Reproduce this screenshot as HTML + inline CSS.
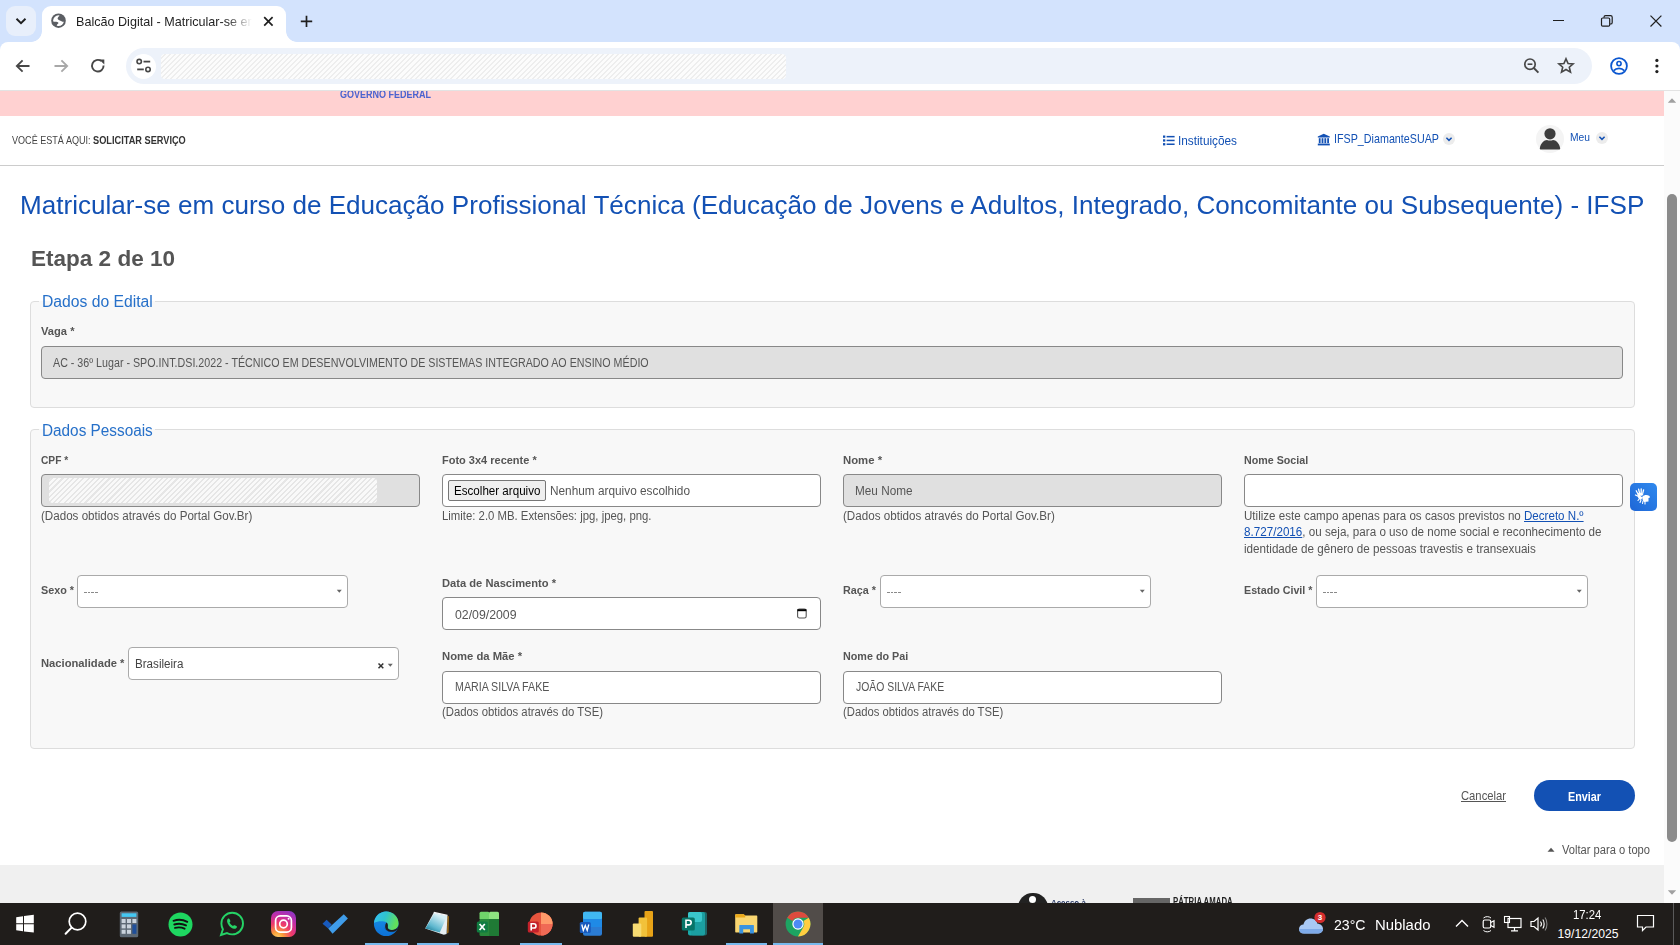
<!DOCTYPE html>
<html lang="pt-BR">
<head>
<meta charset="utf-8">
<title>Balcão Digital</title>
<style>
*{box-sizing:border-box;margin:0;padding:0}
html,body{width:1680px;height:945px;overflow:hidden;background:#fff;font-family:"Liberation Sans",sans-serif;position:relative}
.a{position:absolute}
.t{position:absolute;white-space:nowrap;line-height:1;transform-origin:0 0}
/* chrome */
#tabstrip{left:0;top:0;width:1680px;height:52px;background:#d3e3fd}
#toolbar{left:0;top:42px;width:1680px;height:48px;background:#fff;border-radius:8px 8px 0 0}
#omni{left:126px;top:48px;width:1466px;height:36px;background:#edf2fa;border-radius:18px}
#page{left:0;top:91px;width:1664px;height:812px;background:#fff;overflow:hidden}
#scroll{left:1664px;top:91px;width:16px;height:812px;background:#fbfbfb}
#taskbar{left:0;top:903px;width:1680px;height:42px;background:#201d1b}
.lbl{font-weight:bold;font-size:11px;color:#555}
.help{font-size:12px;color:#555}
.inp{position:absolute;border:1px solid #888;border-radius:4px;background:#fff}
.dis{background:#e0e0e0}
.sel{position:absolute;border:1px solid #aaa;border-radius:4px;background:#fff}
.fs{position:absolute;border:1px solid #ddd;border-radius:4px;background:#f8f8f8}
.leg{font-size:16px;color:#2670c9}
</style>
</head>
<body>
<!-- Chrome window -->
<div id="tabstrip" class="a"></div>
<!-- tab -->
<div class="a" style="left:42px;top:6px;width:244px;height:40px;background:#fff;border-radius:9px 9px 0 0"></div>
<div class="a" style="left:31px;top:31px;width:11px;height:11px;background:radial-gradient(circle at 0 0,#d3e3fd 10.5px,#fff 11.2px)"></div>
<div class="a" style="left:286px;top:31px;width:11px;height:11px;background:radial-gradient(circle at 100% 0,#d3e3fd 10.5px,#fff 11.2px)"></div>
<div class="a" style="left:6px;top:6px;width:30px;height:30px;border-radius:9px;background:#e8effb"></div>
<svg class="a" style="left:14px;top:14px" width="14" height="14" viewBox="0 0 14 14"><path d="M2.5 4.8 L7 9.2 L11.5 4.8" fill="none" stroke="#1f1f1f" stroke-width="1.9"/></svg>
<svg class="a" style="left:51px;top:13px" width="16" height="16" viewBox="0 0 16 16"><defs><clipPath id="gcl"><circle cx="7.5" cy="7.7" r="5.4"/></clipPath></defs><circle cx="7.5" cy="7.7" r="7.3" fill="#5b5e63"/><g clip-path="url(#gcl)"><path d="M0 8.2 L0 0 L8.6 0 L8.4 3 C7.4 3.8 6.6 4.6 6.6 5.6 C6.6 6.8 8.6 7.4 10 7.9 C11.2 8.4 12.2 9 13 8.8 L16 8 L16 16 L7.6 16 C6.6 14.6 5.6 13.2 5.8 12.2 C6 11 7.8 10.6 7.4 9.7 C7 8.9 5.6 8.8 4.4 8.8 C3 8.8 1.6 8.6 0 8.2Z" fill="#fff"/></g></svg>
<div id="tabtitle" class="t" style="left:76px;top:16.2px;font-size:12.6px;color:#1f1f1f;width:178px;overflow:hidden;-webkit-mask-image:linear-gradient(90deg,#000 150px,transparent 176px)">Balcão Digital - Matricular-se em curso</div>
<svg class="a" style="left:262px;top:15px" width="13" height="13" viewBox="0 0 13 13"><path d="M2.2 2.2 L10.6 10.6 M10.6 2.2 L2.2 10.6" stroke="#1f1f1f" stroke-width="1.7"/></svg>
<svg class="a" style="left:299px;top:14px" width="15" height="15" viewBox="0 0 15 15"><path d="M7.5 1.7 V13.1 M1.8 7.4 H13.2" stroke="#1f1f1f" stroke-width="1.7"/></svg>
<!-- window controls -->
<div class="a" style="left:1553px;top:20px;width:11px;height:1.3px;background:#1f1f1f"></div>
<svg class="a" style="left:1600px;top:14px" width="14" height="14" viewBox="0 0 14 14"><rect x="1.5" y="4" width="8.2" height="8.2" rx="1.2" fill="none" stroke="#1f1f1f" stroke-width="1.2"/><path d="M4 3.8 V3.2 C4 2.2 4.6 1.6 5.6 1.6 H10.6 C11.6 1.6 12.2 2.2 12.2 3.2 V8.4 C12.2 9.4 11.6 10 10.6 10 H10" fill="none" stroke="#1f1f1f" stroke-width="1.2"/></svg>
<svg class="a" style="left:1649px;top:14px" width="14" height="14" viewBox="0 0 14 14"><path d="M1.5 1.6 L12.4 12.5 M12.4 1.6 L1.5 12.5" stroke="#1f1f1f" stroke-width="1.2"/></svg>

<div id="toolbar" class="a"></div>
<svg class="a" style="left:13px;top:56px" width="20" height="20" viewBox="0 0 20 20"><path d="M16.5 10 H4.2 M9.6 4.3 L3.8 10 L9.6 15.7" fill="none" stroke="#474747" stroke-width="1.8"/></svg>
<svg class="a" style="left:51px;top:56px" width="20" height="20" viewBox="0 0 20 20"><path d="M3.5 10 H15.8 M10.4 4.3 L16.2 10 L10.4 15.7" fill="none" stroke="#a8a8a8" stroke-width="1.8"/></svg>
<svg class="a" style="left:88px;top:56px" width="20" height="20" viewBox="0 0 20 20"><path d="M15.6 9.6 A5.8 5.8 0 1 1 13.3 5.1" fill="none" stroke="#474747" stroke-width="1.9"/><path d="M11.2 3.4 L16.3 3.4 L16.3 8.5Z" fill="#474747"/></svg>
<div id="omni" class="a"></div>
<div class="a" style="left:131px;top:53.5px;width:25px;height:25px;border-radius:50%;background:#fff"></div>
<svg class="a" style="left:134px;top:57px" width="20" height="18" viewBox="0 0 20 18"><circle cx="5.2" cy="4.6" r="2.2" fill="none" stroke="#474747" stroke-width="1.6"/><path d="M9.5 4.6 H16.2" stroke="#474747" stroke-width="1.8"/><circle cx="14" cy="12.4" r="2.2" fill="none" stroke="#474747" stroke-width="1.6"/><path d="M3.2 12.4 H9.8" stroke="#474747" stroke-width="1.8"/></svg>
<div class="a" style="left:161px;top:54px;width:625px;height:25px;border-radius:4px;background:repeating-linear-gradient(-45deg,#fcfcfc 0 2.2px,#eeeeee 2.2px 3.6px)"></div>
<svg class="a" style="left:1522px;top:56px" width="20" height="20" viewBox="0 0 20 20"><circle cx="8" cy="8.2" r="5.2" fill="none" stroke="#474747" stroke-width="1.7"/><path d="M5.6 8.2 H10.4" stroke="#474747" stroke-width="1.6"/><path d="M11.8 12 L16.4 16.6" stroke="#474747" stroke-width="1.9"/></svg>
<svg class="a" style="left:1556px;top:56px" width="20" height="20" viewBox="0 0 20 20"><path d="M10 2.8 L12.1 7.5 L17.1 7.9 L13.3 11.2 L14.5 16.2 L10 13.5 L5.5 16.2 L6.7 11.2 L2.9 7.9 L7.9 7.5Z" fill="none" stroke="#474747" stroke-width="1.6" stroke-linejoin="miter"/></svg>
<svg class="a" style="left:1608px;top:55px" width="22" height="22" viewBox="0 0 22 22"><circle cx="11" cy="11" r="7.9" fill="none" stroke="#0b57d0" stroke-width="1.8"/><circle cx="11" cy="8.6" r="2.1" fill="none" stroke="#0b57d0" stroke-width="1.6"/><path d="M5.7 15.6 C7.2 13.9 9 13.3 11 13.3 C13 13.3 14.8 13.9 16.3 15.6" fill="none" stroke="#0b57d0" stroke-width="1.7"/></svg>
<svg class="a" style="left:1650px;top:56px" width="14" height="20" viewBox="0 0 14 20"><circle cx="6.9" cy="4.4" r="1.6" fill="#1f1f1f"/><circle cx="6.9" cy="10" r="1.6" fill="#1f1f1f"/><circle cx="6.9" cy="15.6" r="1.6" fill="#1f1f1f"/></svg>
<div class="a" style="left:0;top:90px;width:1680px;height:1px;background:#e3e3e3"></div>

<!-- page -->
<div id="page" class="a"></div>
<div id="scroll" class="a"></div>
<div class="a" style="left:0;top:91px;width:1664px;height:25px;background:#ffd1d1;overflow:hidden">
  <div id="gov" class="t" style="left:340px;top:-2px;font-size:11px;font-weight:bold;color:#4a63cf;transform:scaleX(0.818)">GOVERNO FEDERAL</div>
</div>
<div id="bc1" class="t" style="left:11.5px;top:135.2px;font-size:11px;color:#444;transform:scaleX(0.824)">VOCÊ ESTÁ AQUI: </div>
<div id="bc2" class="t" style="left:92.5px;top:135.2px;font-size:11px;color:#333;font-weight:bold;transform:scaleX(0.837)">SOLICITAR SERVIÇO</div>
<div id="navinst" class="t" style="left:1178px;top:134px;font-size:13px;color:#1351b4;transform:scaleX(0.907)">Instituições</div>
<div id="navifsp" class="t" style="left:1334px;top:132px;font-size:13px;color:#1351b4;transform:scaleX(0.826)">IFSP_DiamanteSUAP</div>
<div id="navmeu" class="t" style="left:1570px;top:131.5px;font-size:10.5px;color:#1351b4;transform:scaleX(0.979)">Meu</div>
<div class="a" style="left:0;top:164.5px;width:1664px;height:1px;background:#ccc"></div>

<div id="title" class="t" style="left:20px;top:192.8px;font-size:25px;color:#1351b4;transform:scaleX(1.043)">Matricular-se em curso de Educação Profissional Técnica (Educação de Jovens e Adultos, Integrado, Concomitante ou Subsequente) - IFSP</div>
<div id="etapa" class="t" style="left:31px;top:248.4px;font-size:22px;color:#555;font-weight:bold;transform:scaleX(1.024)">Etapa 2 de 10</div>

<!-- fieldset 1 -->
<div class="fs" style="left:30px;top:300.5px;width:1605px;height:107px"></div>
<div class="a" style="left:39px;top:296px;width:116px;height:8px;background:#fff"></div>
<div class="a" style="left:39px;top:301px;width:116px;height:6px;background:#f8f8f8"></div>
<div id="leg1" class="t leg" style="left:41.5px;top:293.5px;transform:scaleX(0.981)">Dados do Edital</div>
<div id="lvaga" class="t lbl" style="left:41px;top:325.7px;transform:scaleX(1.014)">Vaga *</div>
<div class="inp dis" style="left:41px;top:346px;width:1582px;height:33px"></div>
<div id="vvaga" class="t" style="left:53px;top:356.8px;font-size:12px;color:#555;transform:scaleX(0.891)">AC - 36º Lugar - SPO.INT.DSI.2022 - TÉCNICO EM DESENVOLVIMENTO DE SISTEMAS INTEGRADO AO ENSINO MÉDIO</div>

<!-- fieldset 2 -->
<div class="fs" style="left:30px;top:428.5px;width:1605px;height:320px"></div>
<div class="a" style="left:39px;top:424px;width:116px;height:8px;background:#fff"></div>
<div class="a" style="left:39px;top:429px;width:116px;height:6px;background:#f8f8f8"></div>
<div id="leg2" class="t leg" style="left:41.5px;top:422.5px;transform:scaleX(0.958)">Dados Pessoais</div>

<div id="lcpf" class="t lbl" style="left:41px;top:454.7px;transform:scaleX(0.927)">CPF *</div>
<div id="lfoto" class="t lbl" style="left:442px;top:454.7px;transform:scaleX(0.999)">Foto 3x4 recente *</div>
<div id="lnome" class="t lbl" style="left:843px;top:454.7px;transform:scaleX(1.031)">Nome *</div>
<div id="lnsoc" class="t lbl" style="left:1244px;top:454.7px;transform:scaleX(0.972)">Nome Social</div>

<div class="inp dis" style="left:41px;top:474px;width:379px;height:33px"></div>
<div class="a" style="left:49px;top:478px;width:328px;height:25px;border-radius:4px;background:repeating-linear-gradient(-45deg,#f9f9f9 0 2.2px,#e6e6e6 2.2px 3.7px)"></div>
<div class="inp" style="left:442px;top:474px;width:379px;height:33px"></div>
<div class="a" style="left:448px;top:480px;width:98px;height:21px;background:#efefef;border:1px solid #767676;border-radius:2px"></div>
<div id="vbtn" class="t" style="left:454px;top:484.5px;font-size:12px;color:#000;transform:scaleX(0.967)">Escolher arquivo</div>
<div id="vnenhum" class="t" style="left:549.5px;top:484.5px;font-size:12px;color:#555;transform:scaleX(0.985)">Nenhum arquivo escolhido</div>
<div class="inp dis" style="left:843px;top:474px;width:379px;height:33px"></div>
<div id="vnome" class="t" style="left:855px;top:484.5px;font-size:12px;color:#555;transform:scaleX(0.980)">Meu Nome</div>
<div class="inp" style="left:1244px;top:474px;width:379px;height:33px"></div>

<div id="h1" class="t help" style="left:41px;top:509.5px;transform:scaleX(0.967)">(Dados obtidos através do Portal Gov.Br)</div>
<div id="h2" class="t help" style="left:442px;top:509.5px;transform:scaleX(0.946)">Limite: 2.0 MB. Extensões: jpg, jpeg, png.</div>
<div id="h3" class="t help" style="left:843px;top:509.5px;transform:scaleX(0.969)">(Dados obtidos através do Portal Gov.Br)</div>
<div id="h4a" class="t help" style="left:1244px;top:509.5px;transform:scaleX(0.965)">Utilize este campo apenas para os casos previstos no <span style="color:#1351b4;text-decoration:underline">Decreto N.º</span></div>
<div id="h4b" class="t help" style="left:1244px;top:526.3px;transform:scaleX(0.971)"><span style="color:#1351b4;text-decoration:underline">8.727/2016</span>, ou seja, para o uso de nome social e reconhecimento de</div>
<div id="h4c" class="t help" style="left:1244px;top:543.1px;transform:scaleX(0.972)">identidade de gênero de pessoas travestis e transexuais</div>

<!-- row 2 -->
<div id="lsexo" class="t lbl" style="left:41px;top:585.2px;transform:scaleX(0.981)">Sexo *</div>
<div class="sel" style="left:77px;top:574.5px;width:271px;height:33px"></div>
<div id="lraca" class="t lbl" style="left:843px;top:585.2px;transform:scaleX(0.981)">Raça *</div>
<div class="sel" style="left:880px;top:574.5px;width:271px;height:33px"></div>
<div id="lestc" class="t lbl" style="left:1244px;top:585.2px;transform:scaleX(0.974)">Estado Civil *</div>
<div class="sel" style="left:1316px;top:574.5px;width:272px;height:33px"></div>
<div id="ldata" class="t lbl" style="left:442px;top:578.2px;transform:scaleX(1.014)">Data de Nascimento *</div>
<div class="inp" style="left:442px;top:597px;width:379px;height:33px"></div>
<div id="vdata" class="t" style="left:455px;top:608.6px;font-size:12px;color:#555;transform:scaleX(1.024)">02/09/2009</div>

<!-- row 3 -->
<div id="lnac" class="t lbl" style="left:41px;top:657.7px;transform:scaleX(1.019)">Nacionalidade *</div>
<div class="sel" style="left:128px;top:647px;width:271px;height:33px"></div>
<div id="vnac" class="t" style="left:134.5px;top:658px;font-size:12.5px;color:#444;transform:scaleX(0.929)">Brasileira</div>
<div id="lmae" class="t lbl" style="left:442px;top:650.7px;transform:scaleX(1.024)">Nome da Mãe *</div>
<div class="inp" style="left:442px;top:670.5px;width:379px;height:33px"></div>
<div id="vmae" class="t" style="left:455px;top:680.8px;font-size:12px;color:#555;transform:scaleX(0.888)">MARIA SILVA FAKE</div>
<div id="h5" class="t help" style="left:442px;top:705.8px;transform:scaleX(0.944)">(Dados obtidos através do TSE)</div>
<div id="lpai" class="t lbl" style="left:843px;top:650.7px;transform:scaleX(0.979)">Nome do Pai</div>
<div class="inp" style="left:843px;top:670.5px;width:379px;height:33px"></div>
<div id="vpai" class="t" style="left:856px;top:680.8px;font-size:12px;color:#555;transform:scaleX(0.867)">JOÃO SILVA FAKE</div>
<div id="h6" class="t help" style="left:843px;top:705.8px;transform:scaleX(0.940)">(Dados obtidos através do TSE)</div>

<!-- buttons -->
<div id="cancel" class="t" style="left:1461px;top:789px;font-size:13px;color:#555;text-decoration:underline;transform:scaleX(0.865)">Cancelar</div>
<div class="a" style="left:1534px;top:780px;width:101px;height:31px;border-radius:16px;background:#1351b4"></div>
<div id="enviar" class="t" style="left:1568px;top:789.5px;font-size:13px;color:#fff;font-weight:bold;transform:scaleX(0.830)">Enviar</div>
<div id="voltar" class="t" style="left:1562px;top:844px;font-size:12px;color:#555;transform:scaleX(0.929)">Voltar para o topo</div>

<svg class="a" style="left:1546px;top:846px" width="10" height="7" viewBox="0 0 10 7"><path d="M1.5 5.8 L5 1.8 L8.5 5.8Z" fill="#555"/></svg>

<!-- select arrows, placeholders -->
<div class="a" style="left:84.0px;top:592px;width:14px;height:1px;background:repeating-linear-gradient(90deg,#8a8a8a 0 2.6px,transparent 2.6px 3.7px)"></div>
<div class="a" style="left:887.0px;top:592px;width:14px;height:1px;background:repeating-linear-gradient(90deg,#8a8a8a 0 2.6px,transparent 2.6px 3.7px)"></div>
<div class="a" style="left:1323.0px;top:592px;width:14px;height:1px;background:repeating-linear-gradient(90deg,#8a8a8a 0 2.6px,transparent 2.6px 3.7px)"></div>
<svg class="a" style="left:336px;top:589px" width="7" height="5" viewBox="0 0 7 5"><path d="M0.8 0.8 H5.8 L3.3 3.8Z" fill="#666"/></svg>
<svg class="a" style="left:1139px;top:589px" width="7" height="5" viewBox="0 0 7 5"><path d="M0.8 0.8 H5.8 L3.3 3.8Z" fill="#666"/></svg>
<svg class="a" style="left:1576px;top:589px" width="7" height="5" viewBox="0 0 7 5"><path d="M0.8 0.8 H5.8 L3.3 3.8Z" fill="#666"/></svg>
<svg class="a" style="left:387px;top:662.5px" width="7" height="5" viewBox="0 0 7 5"><path d="M0.8 0.8 H5.8 L3.3 3.8Z" fill="#666"/></svg>
<svg class="a" style="left:377px;top:661.5px" width="8" height="8" viewBox="0 0 8 8"><path d="M1.5 1.5 L6.3 6.3 M6.3 1.5 L1.5 6.3" stroke="#333" stroke-width="1.5"/></svg>
<!-- calendar icon -->
<svg class="a" style="left:796px;top:607px" width="12" height="12" viewBox="0 0 12 12"><rect x="1.6" y="2" width="8.6" height="9" rx="1.8" fill="none" stroke="#555" stroke-width="1.1"/><path d="M1.4 3.2 H10.4" stroke="#000" stroke-width="2"/></svg>
<!-- vlibras -->
<div class="a" style="left:1630px;top:483px;width:27px;height:28px;border-radius:5px;background:linear-gradient(225deg,#3089ee,#1e66d6)"></div>
<svg class="a" style="left:1633px;top:487px" width="21" height="20" viewBox="0 0 21 20"><path d="M5 7 L3.2 3.8 M6.5 6 L5.6 2.2 M8.2 5.8 L8.2 1.8 M9.8 6.2 L10.6 2.8 M4.5 9 L2.5 8" stroke="#fff" stroke-width="1.3" stroke-linecap="round"/><path d="M4.5 6.5 C6 5.5 9 5.5 10.5 7 L9 9 C8 8 7 8.5 8 9.5 L10 10.5 L7.5 13 C5.5 12 4 9.5 4.5 6.5Z" fill="#fff"/><path d="M9.5 9.5 C11 8 14 7.5 16.5 9 L17 10.5 L15.5 11 L15.5 14.5 L11 15 C9.5 13.5 9 11 9.5 9.5Z" fill="#fff"/><path d="M6.5 11.5 L5 13.5 M8 13 L7 15.5 M10 14 L9.5 16.5 M12 14.5 L12 17" stroke="#fff" stroke-width="1.1" stroke-linecap="round"/></svg>

<!-- header nav icons -->
<svg class="a" style="left:1162px;top:134px" width="14" height="13" viewBox="0 0 14 13"><rect x="1" y="1.5" width="2.3" height="2.3" fill="#1351b4"/><rect x="1" y="5.3" width="2.3" height="2.3" fill="#1351b4"/><rect x="1" y="9.1" width="2.3" height="2.3" fill="#1351b4"/><rect x="4.6" y="1.9" width="8" height="1.5" fill="#1351b4"/><rect x="4.6" y="5.7" width="8" height="1.5" fill="#1351b4"/><rect x="4.6" y="9.5" width="8" height="1.5" fill="#1351b4"/></svg>
<svg class="a" style="left:1317px;top:133px" width="14" height="13" viewBox="0 0 14 13"><path d="M6.8 0.8 L12.8 3.6 V4.6 H0.8 V3.6Z" fill="#1351b4"/><rect x="1.8" y="5.2" width="1.8" height="5" fill="#1351b4"/><rect x="4.6" y="5.2" width="1.8" height="5" fill="#1351b4"/><rect x="7.4" y="5.2" width="1.8" height="5" fill="#1351b4"/><rect x="10.2" y="5.2" width="1.8" height="5" fill="#1351b4"/><rect x="0.8" y="10.6" width="12" height="1.8" fill="#1351b4"/></svg>
<div class="a" style="left:1443px;top:133px;width:12px;height:12px;border-radius:50%;background:#ececec"></div>
<svg class="a" style="left:1443px;top:133px" width="12" height="12" viewBox="0 0 12 12"><path d="M3.4 4.8 L6 7.4 L8.6 4.8" fill="none" stroke="#1351b4" stroke-width="1.5"/></svg>
<div class="a" style="left:1536px;top:124.5px;width:28px;height:28px;border-radius:50%;background:#f4f4f4"></div>
<svg class="a" style="left:1536px;top:124.5px" width="28" height="28" viewBox="0 0 28 28"><circle cx="14" cy="8.8" r="5.6" fill="#3d3d3d"/><path d="M3.8 23.5 C4.6 18 8.2 15 11 15 C12.5 15.8 15.5 15.8 17 15 C19.8 15 23.4 18 24.2 23.5 C24.2 24.2 23.8 24.6 23 24.6 H5 C4.2 24.6 3.8 24.2 3.8 23.5Z" fill="#3d3d3d"/></svg>
<div class="a" style="left:1595.5px;top:132px;width:12px;height:12px;border-radius:50%;background:#ececec"></div>
<svg class="a" style="left:1595.5px;top:132px" width="12" height="12" viewBox="0 0 12 12"><path d="M3.4 4.8 L6 7.4 L8.6 4.8" fill="none" stroke="#1351b4" stroke-width="1.5"/></svg>

<!-- footer -->
<div class="a" style="left:0;top:865px;width:1664px;height:38px;background:#f0f0f0"></div>
<div class="a" style="left:1018px;top:892.5px;width:29.5px;height:29.5px;border-radius:50%;background:#222"></div>
<div class="a" style="left:1029px;top:896px;width:7px;height:7px;border-radius:50%;background:#fff"></div>
<div class="t" style="left:1051px;top:899px;font-size:9px;font-weight:bold;color:#1b2c5a;transform:scaleX(0.88)">Acesso à</div>
<div class="a" style="left:1133px;top:898px;width:37px;height:6px;background:#666"></div>
<div class="t" style="left:1173px;top:897px;font-size:10px;font-weight:bold;color:#222;transform:scaleX(0.78)">PÁTRIA AMADA</div>
<!-- scrollbar -->
<svg class="a" style="left:1666px;top:96px" width="12" height="8" viewBox="0 0 12 8"><path d="M1.8 6.8 L6 2.2 L10.2 6.8Z" fill="#a0a0a0"/></svg>
<div class="a" style="left:1667px;top:194px;width:10px;height:648px;border-radius:5px;background:#8b8b8b"></div>
<svg class="a" style="left:1666px;top:889px" width="12" height="8" viewBox="0 0 12 8"><path d="M1.8 1.2 L6 5.8 L10.2 1.2Z" fill="#a0a0a0"/></svg>

<div id="taskbar" class="a"></div>
<!-- active app highlight / indicators -->
<div class="a" style="left:773px;top:903px;width:50px;height:42px;background:#514c49"></div>
<div class="a" style="left:365px;top:943px;width:43px;height:2px;background:#76b9ed"></div>
<div class="a" style="left:417px;top:943px;width:42px;height:2px;background:#76b9ed"></div>
<div class="a" style="left:520px;top:943px;width:42px;height:2px;background:#76b9ed"></div>
<div class="a" style="left:726px;top:943px;width:41px;height:2px;background:#76b9ed"></div>
<div class="a" style="left:773px;top:943px;width:50px;height:2px;background:#76b9ed"></div>
<!-- windows logo -->
<svg class="a" style="left:15px;top:914px" width="20" height="20" viewBox="0 0 20 20"><path d="M1.2 3.2 L8 2.2 V9.2 H1.2Z M9 2 L18.8 0.8 V9.2 H9Z M1.2 10.2 H8 V17.2 L1.2 16.3Z M9 10.2 H18.8 V18.6 L9 17.4Z" fill="#fff"/></svg>
<!-- search -->
<svg class="a" style="left:62px;top:910px" width="26" height="28" viewBox="0 0 26 28"><circle cx="15.5" cy="11.5" r="8.3" fill="none" stroke="#fff" stroke-width="1.7"/><path d="M9.6 17.6 L3.6 23.8" stroke="#fff" stroke-width="2" stroke-linecap="round"/></svg>
<!-- calculator -->
<svg class="a" style="left:119px;top:911px" width="20" height="27" viewBox="0 0 20 27"><rect x="0.8" y="0.5" width="18.4" height="25.8" rx="1.6" fill="#5d6975"/><rect x="2.6" y="2.3" width="14.8" height="3.6" fill="#45c8f2"/><g fill="#c9d2dc"><rect x="2.6" y="8" width="4" height="4"/><rect x="8" y="8" width="4" height="4"/><rect x="13.4" y="8" width="4" height="4"/><rect x="2.6" y="13.4" width="4" height="4"/><rect x="8" y="13.4" width="4" height="4"/><rect x="2.6" y="18.8" width="4" height="4"/><rect x="8" y="18.8" width="4" height="4"/></g><rect x="13.4" y="13.4" width="4" height="9.4" fill="#1f4f9a"/></svg>
<!-- spotify -->
<svg class="a" style="left:168px;top:912px" width="25" height="25" viewBox="0 0 25 25"><circle cx="12.5" cy="12.5" r="12" fill="#1ed760"/><path d="M5.5 8.8 C9.5 7.4 15 7.6 19.3 9.8 M6.3 12.5 C10 11.4 14.5 11.7 18 13.4 M7 15.9 C10 15.1 13.6 15.3 16.6 16.7" fill="none" stroke="#111" stroke-width="1.9" stroke-linecap="round"/></svg>
<!-- whatsapp -->
<svg class="a" style="left:219px;top:911px" width="26" height="26" viewBox="0 0 26 26"><path d="M13.2 1.8 C19.2 1.8 24 6.6 24 12.6 C24 18.6 19.2 23.4 13.2 23.4 C11.3 23.4 9.6 22.9 8 22.1 L2 24 L3.9 18.3 C2.9 16.6 2.4 14.7 2.4 12.6 C2.4 6.6 7.2 1.8 13.2 1.8Z" fill="none" stroke="#25d366" stroke-width="1.9"/><path d="M9.2 7.6 C9.8 7.4 10.4 7.6 10.6 8.2 L11.4 10 C11.5 10.4 11.3 10.8 11 11.1 L10.5 11.6 C11.2 13.1 12.5 14.4 14 15.1 L14.6 14.5 C14.9 14.2 15.3 14.1 15.7 14.3 L17.4 15.1 C17.9 15.4 18.1 16 17.8 16.5 C17.2 17.5 16.2 18 15 17.8 C12 17.2 9 14.3 8.2 11 C7.9 9.6 8.3 8.2 9.2 7.6Z" fill="#25d366"/></svg>
<!-- instagram -->
<div class="a" style="left:271px;top:911px;width:25px;height:26px;border-radius:7px;background:radial-gradient(circle at 25% 105%,#ffd776 0,#f9a23a 18%,#ee3a6a 45%,#c02ea8 70%,#7a3ad0 100%)"></div>
<svg class="a" style="left:271px;top:911px" width="25" height="26" viewBox="0 0 25 26"><rect x="4.6" y="4.9" width="15.8" height="16.2" rx="4.6" fill="none" stroke="#fff" stroke-width="1.7"/><circle cx="12.5" cy="13" r="3.8" fill="none" stroke="#fff" stroke-width="1.7"/><circle cx="17.6" cy="7.8" r="1" fill="#fff"/></svg>
<!-- to do -->
<svg class="a" style="left:321px;top:913px" width="28" height="22" viewBox="0 0 28 22"><path d="M1.5 10.8 L5.6 6.8 L10.6 11.6 L7.2 15.6Z" fill="#185abd"/><path d="M7.2 15.6 L22.8 1.2 L26.9 5.4 L11.6 20.8Z" fill="#3f9ce9"/></svg>
<!-- edge -->
<svg class="a" style="left:373px;top:911px" width="26" height="26" viewBox="0 0 26 26"><defs><linearGradient id="eg1" x1="0" y1="0" x2="1" y2="0.3"><stop offset="0" stop-color="#36c2f4"/><stop offset="0.5" stop-color="#2fc3cf"/><stop offset="1" stop-color="#62e05a"/></linearGradient><linearGradient id="eg2" x1="0" y1="0" x2="0" y2="1"><stop offset="0" stop-color="#1a92e6"/><stop offset="1" stop-color="#0d72d8"/></linearGradient></defs><circle cx="13.2" cy="12.8" r="12.3" fill="url(#eg2)"/><path d="M1 12 C1.6 5.5 6.8 0.5 13.2 0.5 C20 0.5 25.5 5.8 25.5 12.2 C25.5 16.4 22.5 19 18.8 19 C16 19 14.6 17.6 14.8 16 C15.4 14 14.6 10.8 11.2 10.4 C7 10 3.2 10.6 1 12Z" fill="url(#eg1)"/><path d="M12.8 11.4 C10.6 12.4 10.6 15.6 12.2 17.8 C14.5 20.8 19 21.2 22.6 19.8 C23.8 19.3 24.6 18.6 25 18 C24 19.6 21.8 21.2 18.8 21.2 C14.8 21.2 11.2 19 11 15 C10.9 13.2 11.6 12 12.8 11.4Z" fill="#0b5ab0"/><path d="M14.8 16 C14.6 17.6 16 19 18.8 19 C21.6 19 24 17.6 25 15.6 C24.9 16.6 24.7 17.4 24.3 18.2 C23 20 20.8 20.8 18.6 20.8 C15.2 20.8 12.6 19 12.2 16.2 C12 14.2 12.6 12.6 13.4 11.4 C14.8 12.2 15.2 14.4 14.8 16Z" fill="#201d1b"/></svg>
<!-- notepad -->
<svg class="a" style="left:420px;top:905px" width="40" height="35" viewBox="0 0 40 35"><defs><linearGradient id="npg" x1="0.1" y1="0.9" x2="0.6" y2="0.1"><stop offset="0" stop-color="#1f7f99"/><stop offset="0.35" stop-color="#5fb8cf"/><stop offset="1" stop-color="#d4eef5"/></linearGradient></defs><path d="M27.3 10.6 L29 11.6 L28.6 27.4 L27 28.4Z" fill="#9a6a1c"/><path d="M13.8 7.4 L27.4 10.4 L26.6 29 L23.8 29.8 L5.2 23.6Z" fill="#e6eef2"/><path d="M14.2 8.6 L27 11.2 L19.8 27.6 L5.4 23.4Z" fill="url(#npg)"/><path d="M13.8 7.4 L27.4 10.4" stroke="#f4f6f8" stroke-width="1.2"/></svg>
<!-- excel -->
<svg class="a" style="left:476px;top:911px" width="24" height="26" viewBox="0 0 24 26"><rect x="3.5" y="0.8" width="10" height="8" rx="1.5" fill="#6fd46a"/><rect x="13" y="0.8" width="10" height="8" rx="1.5" fill="#8ee382"/><rect x="3.5" y="8" width="19.5" height="17" rx="1.5" fill="#27883b"/><rect x="13" y="8" width="10" height="17" fill="#1f7a35"/><rect x="0.8" y="10.5" width="11" height="11" rx="1.6" fill="#107c41"/><path d="M3.6 13 L8.8 19 M8.8 13 L3.6 19" stroke="#fff" stroke-width="1.7"/></svg>
<!-- powerpoint -->
<svg class="a" style="left:527px;top:911px" width="26" height="26" viewBox="0 0 26 26"><circle cx="14" cy="13" r="11.6" fill="#e6543d"/><path d="M14 1.4 A11.6 11.6 0 0 1 25.6 13 H14Z" fill="#ff9a6a"/><path d="M14 13 H25.6 A11.6 11.6 0 0 1 14 24.6Z" fill="#f06a55"/><rect x="0.8" y="10.5" width="11" height="11" rx="1.6" fill="#c4212b"/><path d="M4.2 19.5 V12.8 H6.8 C8.3 12.8 9 13.6 9 14.9 C9 16.2 8.2 17 6.8 17 H4.2" fill="none" stroke="#fff" stroke-width="1.6"/></svg>
<!-- word -->
<svg class="a" style="left:579px;top:911px" width="24" height="26" viewBox="0 0 24 26"><rect x="4" y="0.8" width="19" height="24" rx="2" fill="#2b7cd3"/><rect x="4" y="0.8" width="19" height="8" rx="2" fill="#41b8f2"/><rect x="4" y="8" width="19" height="8" fill="#1f8ae6"/><rect x="0.8" y="11" width="11" height="11" rx="1.6" fill="#185abd"/><path d="M2.8 13.5 L4.3 19.5 L6.3 14.5 L8.2 19.5 L9.8 13.5" fill="none" stroke="#fff" stroke-width="1.3"/></svg>
<!-- power bi -->
<svg class="a" style="left:632px;top:910px" width="22" height="28" viewBox="0 0 22 28"><rect x="12.5" y="1" width="8.5" height="25.8" rx="1" fill="#e8a317"/><rect x="6.6" y="7.5" width="8.5" height="19.3" rx="1" fill="#f2c23a"/><rect x="0.8" y="13.5" width="8.5" height="13.3" rx="1" fill="#f7db72"/></svg>
<!-- publisher -->
<svg class="a" style="left:681px;top:911px" width="27" height="26" viewBox="0 0 27 26"><rect x="7" y="1" width="17" height="23.5" rx="2" fill="#1aa9a9"/><rect x="10" y="1" width="16" height="23.5" rx="2" fill="#1c9a9c" opacity="0.6"/><rect x="7" y="1" width="14" height="10" rx="2" fill="#3ac7cb"/><rect x="0.8" y="6.5" width="13" height="13" rx="1.6" fill="#077568"/><path d="M5 17 V9.3 H7.8 C9.4 9.3 10.2 10.2 10.2 11.6 C10.2 13 9.3 13.9 7.8 13.9 H5" fill="none" stroke="#fff" stroke-width="1.6"/></svg>
<!-- explorer -->
<svg class="a" style="left:734px;top:912px" width="24" height="24" viewBox="0 0 24 24"><path d="M1.2 3.2 C1.2 2.6 1.6 2.2 2.2 2.2 H9.6 L11.2 3.6 H22.3 C22.9 3.6 23.3 4 23.3 4.6 V19.6 C23.3 20.2 22.9 20.6 22.3 20.6 H2.2 C1.6 20.6 1.2 20.2 1.2 19.6Z" fill="#f9d671"/><path d="M1.2 3.2 C1.2 2.6 1.6 2.2 2.2 2.2 H9.6 L11.2 3.6 V5.4 H1.2Z" fill="#eba91a"/><path d="M5.3 21.6 V13.4 C5.3 13.1 5.5 12.9 5.8 12.9 H19.4 C19.7 12.9 19.9 13.1 19.9 13.4 V21.6 H16 V17.2 H9.2 V21.6Z" fill="#3a93e0"/></svg>
<!-- chrome -->
<svg class="a" style="left:785px;top:911px" width="26" height="26" viewBox="0 0 26 26"><circle cx="13" cy="13" r="12.4" fill="#1da462"/><path d="M13 0.6 A12.4 12.4 0 0 1 23.75 6.8 H13 A6.2 6.2 0 0 0 7.6 9.9 L2.25 6.8 A12.4 12.4 0 0 1 13 0.6Z" fill="#dd4b3e"/><path d="M23.75 6.8 A12.4 12.4 0 0 1 13 25.4 L18.4 16.1 A6.2 6.2 0 0 0 18.4 9.9 Z" fill="#ffcd40"/><circle cx="13" cy="13" r="5.7" fill="#fff"/><circle cx="13" cy="13" r="4.5" fill="#4c8bf5"/></svg>

<!-- tray -->
<svg class="a" style="left:1298px;top:910px" width="32" height="26" viewBox="0 0 32 26"><path d="M6 23.5 C2.8 23.5 1 21.5 1 19 C1 16.5 3 14.6 5.5 14.6 C6 11 9 8.5 12.6 8.5 C16 8.5 18.8 10.6 19.5 13.8 C22.5 13.8 25 16 25 18.8 C25 21.5 22.8 23.5 20 23.5Z" fill="#a8c8f4"/><path d="M6 23.5 C2.8 23.5 1 21.5 1 19 L25 19 C25 21.5 22.8 23.5 20 23.5Z" fill="#7eaae8"/><circle cx="22" cy="7.5" r="5.6" fill="#d42d2d"/><text x="22" y="10.4" font-family="Liberation Sans" font-size="8" font-weight="bold" fill="#fff" text-anchor="middle">3</text></svg>
<div class="t" style="left:1334px;top:916.6px;font-size:15.2px;color:#fff;transform:scaleX(0.93)">23°C</div>
<div class="t" style="left:1375px;top:916.6px;font-size:15.2px;color:#fff;transform:scaleX(0.98)">Nublado</div>
<svg class="a" style="left:1454px;top:917px" width="16" height="12" viewBox="0 0 16 12"><path d="M2 9.5 L8 3.5 L14 9.5" fill="none" stroke="#fff" stroke-width="1.4"/></svg>
<svg class="a" style="left:1481px;top:914px" width="16" height="20" viewBox="0 0 16 20"><rect x="2.2" y="6" width="7.5" height="8" rx="1.5" fill="none" stroke="#fff" stroke-width="1.2"/><path d="M9.7 8.5 L13 6.8 V13.2 L9.7 11.5" fill="none" stroke="#fff" stroke-width="1.2"/><path d="M2.5 4 C4.5 2.2 8 2.2 10 4 M2.5 16.5 C4.5 18.3 8 18.3 10 16.5" fill="none" stroke="#fff" stroke-width="1"/></svg>
<svg class="a" style="left:1503px;top:915px" width="20" height="18" viewBox="0 0 20 18"><rect x="5" y="3.5" width="13" height="9" fill="none" stroke="#fff" stroke-width="1.2"/><path d="M11.5 12.5 V15.5 M8 15.8 H15" stroke="#fff" stroke-width="1.2"/><rect x="1.5" y="1.5" width="5" height="6" fill="none" stroke="#fff" stroke-width="1.1"/></svg>
<svg class="a" style="left:1529px;top:915px" width="20" height="18" viewBox="0 0 20 18"><path d="M2 6.5 H5 L9 3 V15 L5 11.5 H2Z" fill="none" stroke="#fff" stroke-width="1.2"/><path d="M11.5 6.5 C12.5 7.8 12.5 10.2 11.5 11.5 M13.8 4.5 C15.6 6.8 15.6 11.2 13.8 13.5" fill="none" stroke="#fff" stroke-width="1.1"/><path d="M16 2.5 C18.6 5.8 18.6 12.2 16 15.5" fill="none" stroke="#888" stroke-width="1.1"/></svg>
<div class="t" style="left:1573px;top:908.5px;font-size:12.2px;color:#fff;transform:scaleX(0.93)">17:24</div>
<div class="t" style="left:1557.5px;top:927.5px;font-size:12.2px;color:#fff">19/12/2025</div>
<svg class="a" style="left:1636px;top:914px" width="20" height="20" viewBox="0 0 20 20"><path d="M1.5 1.5 H17.5 V13 H10 L6.5 16.5 V13 H1.5Z" fill="none" stroke="#fff" stroke-width="1.2"/></svg>
<div class="a" style="left:1673px;top:903px;width:1px;height:42px;background:#5a5a5a"></div>
</body>
</html>
